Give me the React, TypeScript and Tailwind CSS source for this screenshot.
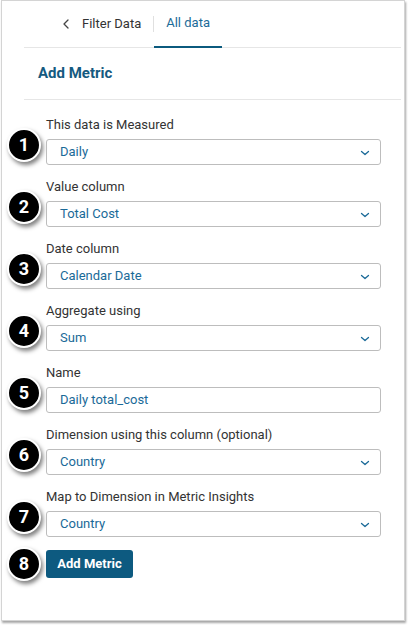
import React from "react";

const Chevron = () => (
  <svg width="12" height="8" viewBox="0 0 12 8" fill="none" className="absolute right-[9px] top-[9px]">
    <path d="M2.5 2.5 L6 5.5 L9.5 2.5" stroke="#1a6a98" strokeWidth="1.3" strokeLinecap="round" strokeLinejoin="round" />
  </svg>
);

const Badge = ({ n, top }: { n: number; top: string }) => (
  <div className={`absolute left-[-39px] ${top} w-[34px] h-[34px] rounded-full bg-black border-2 border-white shadow-[2px_3px_4px_rgba(0,0,0,0.5)] flex items-center justify-center text-white text-[18px] font-bold leading-none`}>
    {n}
  </div>
);

const rows: { label: string; value: string; select: boolean }[] = [
  { label: "This data is Measured", value: "Daily", select: true },
  { label: "Value column", value: "Total Cost", select: true },
  { label: "Date column", value: "Calendar Date", select: true },
  { label: "Aggregate using", value: "Sum", select: true },
  { label: "Name", value: "Daily total_cost", select: false },
  { label: "Dimension using this column (optional)", value: "Country", select: true },
  { label: "Map to Dimension in Metric Insights", value: "Country", select: true },
];

export default function App() {
  return (
    <div className="w-[408px] h-[625px] bg-white" style={{ fontFamily: "Roboto, 'Noto Sans', sans-serif" }}>
      <div className="ml-[1px] w-[404px] h-[621px] border border-[#d4d4d4] shadow-[1px_2px_2px_rgba(0,0,0,0.35)] bg-white">
        <div className="ml-[22px] mr-[3px]">
          {/* tabs */}
          <div className="h-[47px] border-b border-[#e6e6e6] flex pl-[22px]">
            <div className="flex items-center pl-[12px] pr-[12px] text-[13px] text-[#333]">
              <svg width="16" height="16" viewBox="0 0 16 16" fill="none" className="mr-[8px]">
                <path d="M10 4 L6 8 L10 12" stroke="#444" strokeWidth="1.3" strokeLinecap="round" strokeLinejoin="round" />
              </svg>
              <span className="whitespace-nowrap">Filter Data</span>
            </div>
            <div className="flex items-center">
              <div className="w-px h-[16px] bg-[#e0e0e0]" />
            </div>
            <div className="flex items-center px-[12px] text-[13px] text-[#1c6b98] border-b-2 border-[#0b5a7e] mb-[-1px] pb-px whitespace-nowrap">
              All data
            </div>
          </div>
          {/* heading */}
          <div className="h-[52px] border-b border-[#e6e6e6] flex items-center pl-[14px]">
            <span className="text-[15px] font-bold text-[#155a80]">Add Metric</span>
          </div>
          {/* form */}
          <div className="pl-[22px] pt-[16px] w-[357px]">
            {rows.map((r, i) => (
              <div key={i} className="relative mb-[13px]">
                <Badge n={i + 1} top="top-[12px]" />
                <div className="h-[18px] leading-[18px] text-[13px] text-[#333]">{r.label}</div>
                <div className="relative mt-[5px] h-[26px] border border-[#bdbdbd] rounded-[3px] pl-[13px] flex items-center text-[13px] text-[#1a6a98]">
                  {r.value}
                  {r.select && <Chevron />}
                </div>
              </div>
            ))}
            <div className="relative">
              <Badge n={8} top="top-[-3px]" />
              <button className="h-[28px] w-[87px] rounded-[3px] bg-[#0d5a80] text-white text-[13px] font-bold">
                Add Metric
              </button>
            </div>
          </div>
        </div>
      </div>
    </div>
  );
}
